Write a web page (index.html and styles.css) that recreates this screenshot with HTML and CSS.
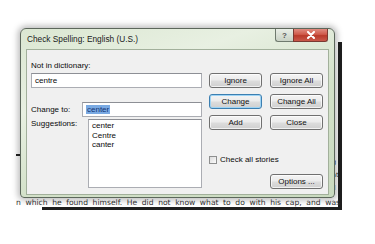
FILE: index.html
```html
<!DOCTYPE html>
<html lang="en">
  <head>
    <meta charset="UTF-8" />
    <meta name="viewport" content="width=device-width, initial-scale=1.0" />
    <title>Check Spelling</title>
    <link rel="stylesheet" href="styles.css">
  </head>
  <body>
    <div class="scene">
      <!-- page behind the dialog -->
      <div class="doc-peek">g<br />at<br />ll</div>
      <div class="doc-edge"></div>
      <div class="doc-bottom"></div>
      <span class="doc-dash"></span>
      <p class="doc-line">n which he found himself. He did not know what to do with his cap, and was</p>

      <div class="dialog">
        <div class="titlebar">
          <div class="title">Check Spelling: English (U.S.)</div>
          <div class="caption">
            <div class="cap-btn help">?</div>
            <div class="cap-btn close">
              <svg width="10" height="8" viewBox="0 0 10 8">
                <path d="M2 1 L8 7 M8 1 L2 7" stroke="#fff" stroke-width="2" stroke-linecap="round" />
              </svg>
            </div>
          </div>
        </div>
        <div class="panel">
          <div class="left">
            <div class="label">Not in dictionary:</div>
            <div class="field wide">centre</div>
            <div class="row change-row">
              <div class="label row-label">Change to:</div>
              <div class="field narrow"><span class="sel">center</span></div>
            </div>
            <div class="row sugg-row">
              <div class="label row-label">Suggestions:</div>
              <div class="list">
                <div>center</div>
                <div>Centre</div>
                <div>canter</div>
              </div>
            </div>
          </div>
          <div class="right">
            <div class="btn-grid">
              <div class="btn">Ignore</div>
              <div class="btn">Ignore All</div>
              <div class="btn default">Change</div>
              <div class="btn">Change All</div>
              <div class="btn">Add</div>
              <div class="btn">Close</div>
            </div>
            <label class="check">
              <span class="box"></span>
              <span>Check all stories</span>
            </label>
            <div class="options-row">
              <div class="btn">Options ...</div>
            </div>
          </div>
        </div>
      </div>
    </div>
  </body>
</html>
```

FILE: styles.css
```css
* {
  margin: 0;
  padding: 0;
  box-sizing: border-box;
}
html,
body {
  width: 100%;
  height: 100%;
  background: #fff;
  overflow: hidden;
}
body {
  font-family: "Liberation Sans", Arial, sans-serif;
  font-size: 8px;
  color: #0a0a0a;
}
.scene {
  position: relative;
  width: 375px;
  height: 244px;
  padding: 28px 0 0 20px;
}

/* the document page peeking out */
.doc-edge {
  position: absolute;
  left: 338px;
  top: 42px;
  width: 4px;
  height: 168px;
  background: #1e1e1e;
}
.doc-bottom {
  position: absolute;
  left: 42px;
  top: 207px;
  width: 300px;
  height: 3px;
  background: #1e1e1e;
}
.doc-dash {
  position: absolute;
  left: 16px;
  top: 154px;
  width: 6px;
  height: 2px;
  background: #222;
}
.doc-peek {
  position: absolute;
  left: 332px;
  top: 156px;
  font-family: "DejaVu Sans", sans-serif;
  font-size: 6.5px;
  line-height: 13px;
  color: #333;
}
.doc-line {
  position: absolute;
  left: 16px;
  top: 198px;
  width: 324px;
  font-family: "DejaVu Sans", sans-serif;
  font-size: 7.6px;
  line-height: 10px;
  color: #333;
  white-space: nowrap;
  text-align: justify;
  text-align-last: justify;
}

/* dialog */
.dialog {
  position: relative;
  z-index: 1;
  width: 315px;
  height: 170px;
  display: flex;
  flex-direction: column;
  padding: 0 5px 2px 5px;
  border: 1px solid #5c675b;
  border-radius: 6px 6px 4px 4px;
  background: linear-gradient(160deg, #dbe7d2 0%, #e8f0e2 30%, #d3e1c9 60%, #c9dabf 100%);
  box-shadow: 0 0 6px 2px rgba(0, 0, 0, 0.28);
}
.titlebar {
  height: 20px;
  display: flex;
  align-items: flex-start;
}
.title {
  padding: 5px 0 0 1px;
  font-size: 8.3px;
  line-height: 10px;
  color: #1a1a1a;
}
.caption {
  margin-left: auto;
  margin-right: 1px;
  display: flex;
}
.cap-btn {
  height: 13px;
  display: flex;
  align-items: center;
  justify-content: center;
  border: 1px solid #6f7a6e;
  border-top: none;
}
.help {
  width: 18px;
  border-radius: 0 0 0 3px;
  border-right: none;
  background: linear-gradient(#e9eee6, #c9d2c5);
  color: #555;
  font-size: 8px;
  font-weight: bold;
}
.close {
  width: 35px;
  border-radius: 0 0 3px 0;
  border-color: #7a3a32;
  background: linear-gradient(#e08c80 0%, #cf5a4a 45%, #b93a2a 55%, #c9584a 100%);
}

.panel {
  flex: 1;
  display: flex;
  gap: 7px;
  padding: 11px 5px 0 4px;
  border: 1px solid #a2b09b;
  background: #f0f0f0;
}
.left {
  width: 171px;
  display: flex;
  flex-direction: column;
}
.label {
  height: 10px;
  line-height: 10px;
}
.field {
  height: 15px;
  line-height: 13px;
  padding-left: 3px;
  background: #fff;
  border: 1px solid #abadb3;
  border-top-color: #8d8f95;
}
.wide {
  margin-top: 2px;
}
.row {
  display: flex;
}
.change-row {
  margin-top: 14px;
  align-items: center;
}
.change-row .row-label {
  width: 51px;
}
.narrow {
  width: 120px;
}
.sel {
  background: #7aaae3;
  color: #123372;
  padding: 0 1px;
}
.sugg-row {
  margin-top: 2px;
}
.sugg-row .row-label {
  width: 57px;
}
.list {
  width: 114px;
  height: 69px;
  padding: 1px 0 0 3px;
  line-height: 9.5px;
  background: #fff;
  border: 1px solid #abadb3;
  border-top-color: #8d8f95;
}

.right {
  width: 114px;
  display: flex;
  flex-direction: column;
}
.btn-grid {
  margin-top: 12px;
  display: grid;
  grid-template-columns: 53px 53px;
  grid-auto-rows: 15px;
  column-gap: 8px;
  row-gap: 6px;
}
.btn {
  height: 15px;
  display: flex;
  align-items: center;
  justify-content: center;
  border: 1px solid #707070;
  border-radius: 3px;
  background: linear-gradient(#f4f4f4 0%, #ebebeb 48%, #dddddd 52%, #cfcfcf 100%);
  box-shadow: inset 0 0 0 1px rgba(255, 255, 255, 0.7);
  color: #111;
}
.default {
  border-color: #3c7fb1;
  box-shadow: inset 0 0 0 1px #9ed4f5;
}
.check {
  margin-top: 25px;
  display: flex;
  align-items: center;
  gap: 3px;
  height: 9px;
}
.box {
  width: 8px;
  height: 8px;
  border: 1px solid #8e8f8f;
  background: linear-gradient(135deg, #dcdcdc, #fbfbfb);
}
.options-row {
  margin-top: 10px;
  display: flex;
  justify-content: flex-end;
}
.options-row .btn {
  width: 53px;
}
```
